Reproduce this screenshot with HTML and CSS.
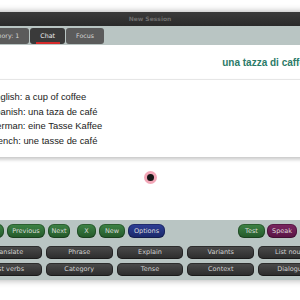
FILE: index.html
```html
<!DOCTYPE html>
<html>
<head>
<meta charset="utf-8">
<link rel="stylesheet" href="styles.css">
</head>
<body>
<div class="window">
  <div class="titlebar">New Session</div>
  <div class="tabbar">
    <div class="tab">Memory: 1</div>
    <div class="tab active">Chat</div>
    <div class="tab">Focus</div>
  </div>
  <div class="content">
    <div class="heading">una tazza di caffè</div>
    <div class="card">
      <p>English: a cup of coffee</p>
      <p>Spanish: una taza de café</p>
      <p>German: eine Tasse Kaffee</p>
      <p>French: une tasse de café</p>
    </div>
    <div class="rec"><span></span></div>
  </div>
  <div class="panel">
    <div class="row1">
      <div class="group">
        <div class="btn green w-back">Back</div>
        <div class="btn green w-prev">Previous</div>
        <div class="btn green w-next">Next</div>
        <div class="btn green w-x">X</div>
        <div class="btn green w-new">New</div>
        <div class="btn blue w-opt">Options</div>
      </div>
      <div class="group right">
        <div class="btn green w-test">Test</div>
        <div class="btn purple w-speak">Speak</div>
      </div>
    </div>
    <div class="grid">
      <div class="gbtn">Translate</div>
      <div class="gbtn">Phrase</div>
      <div class="gbtn">Explain</div>
      <div class="gbtn">Variants</div>
      <div class="gbtn">List nouns</div>
      <div class="gbtn">List verbs</div>
      <div class="gbtn">Category</div>
      <div class="gbtn">Tense</div>
      <div class="gbtn">Context</div>
      <div class="gbtn">Dialogue</div>
    </div>
  </div>
</div>
</body>
</html>
```
FILE: styles.css
```css
html, body {
  margin: 0;
  padding: 0;
  background: #ffffff;
}
body {
  width: 300px;
  height: 300px;
  overflow: hidden;
  font-family: "DejaVu Sans", sans-serif;
}
.window {
  margin: 12px 0 0 -28px;
  width: 356px;
  background: #ffffff;
  box-shadow: 0 0 7px rgba(0, 0, 0, 0.35);
}
.titlebar {
  height: 14px;
  background: linear-gradient(#3b3b3b, #2a2a2a);
  color: #6e6e6e;
  font: bold 6px/14px "DejaVu Sans", sans-serif;
  text-align: center;
}
.tabbar {
  height: 19px;
  box-sizing: border-box;
  padding: 2px 0 0 4px;
  background: #b9c5c3;
  display: flex;
  gap: 1px;
}
.tab {
  position: relative;
  height: 16px;
  padding: 0 10px;
  border-radius: 3px;
  background: #5b5b5b;
  color: #d6d6d6;
  font: 6.3px/16px "DejaVu Sans", sans-serif;
}
.tab.active {
  background: #3a3a3a;
  color: #eeeeee;
}
.tab.active::after {
  content: "";
  position: absolute;
  left: 6px;
  right: 5px;
  bottom: 0;
  height: 2px;
  background: #d62b2b;
}
.content {
  height: 175px;
  display: flex;
  flex-direction: column;
}
.heading {
  margin: 12px 23px 0 0;
  text-align: right;
  font: bold 10px/12px "Liberation Sans", Arial, sans-serif;
  color: #2b7a68;
}
.card {
  margin-top: 10px;
  border-top: 1px solid #e6e6e6;
  border-bottom: 1px solid #cfcfcf;
  padding: 10px 17px 9px;
  box-shadow: 0 2px 3px rgba(0, 0, 0, 0.18);
  font: 9.4px/14.5px "Liberation Sans", Arial, sans-serif;
  color: #222222;
}
.card p {
  margin: 0;
  white-space: nowrap;
}
.rec {
  align-self: center;
  margin-top: 13px;
  width: 13px;
  height: 13px;
  border-radius: 50%;
  background: #f2a6b7;
  display: flex;
  align-items: center;
  justify-content: center;
}
.rec span {
  width: 7px;
  height: 7px;
  border-radius: 50%;
  background: #161616;
}
.panel {
  background: #b9c5c3;
  padding: 4px 3px;
  display: flex;
  flex-direction: column;
  gap: 4px;
}
.row1 {
  display: flex;
  justify-content: space-between;
  margin-bottom: 4px;
}
.group {
  display: flex;
  gap: 3px;
}
.group.right {
  gap: 2px;
  margin-right: 28px;
}
.btn {
  height: 14px;
  border-radius: 6px;
  color: #dcdcdc;
  font: 6.5px/14px "DejaVu Sans", sans-serif;
  text-align: center;
  box-shadow: inset 0 0 0 1px rgba(0, 0, 0, 0.28);
}
.green {
  background: linear-gradient(#3e8546, #235729);
}
.blue {
  background: linear-gradient(#2e3f98, #1a2868);
}
.purple {
  background: linear-gradient(#7c2662, #581343);
}
.w-back { width: 29px; }
.w-prev { width: 38px; }
.w-next { width: 22px; }
.w-x { width: 19px; margin-left: 4px; }
.w-new { width: 26px; }
.w-opt { width: 37px; }
.w-test { width: 27px; }
.w-speak { width: 30px; }
.grid {
  display: grid;
  grid-template-columns: repeat(5, 1fr);
  gap: 4px;
}
.gbtn {
  height: 13px;
  border-radius: 5px;
  background: linear-gradient(#4c4c4c, #2b2b2b);
  box-shadow: inset 0 0 0 1px rgba(0, 0, 0, 0.4);
  color: #d0d0d0;
  font: 6.5px/13px "DejaVu Sans", sans-serif;
  text-align: center;
  white-space: nowrap;
}
```
